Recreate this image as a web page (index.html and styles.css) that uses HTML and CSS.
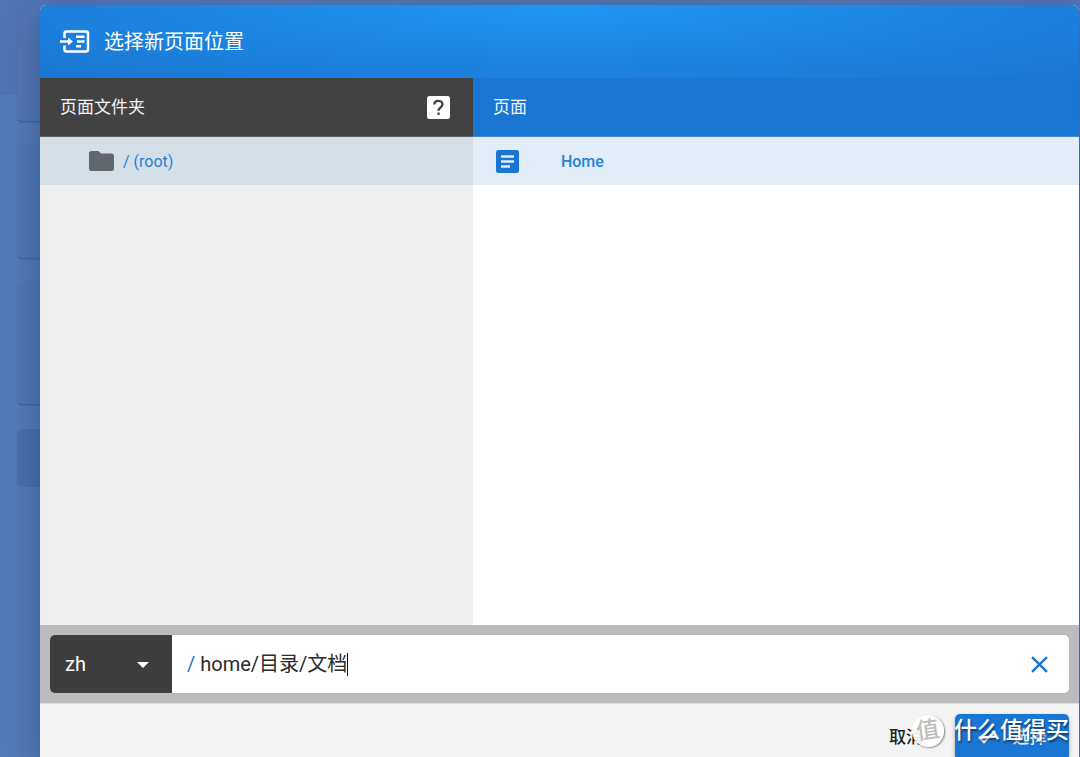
FILE: index.html
```html
<!DOCTYPE html>
<html lang="zh">
<head>
<meta charset="utf-8">
<title>选择新页面位置</title>
<link rel="stylesheet" href="styles.css">
</head>
<body>
<div class="backdrop" aria-hidden="true">
  <div class="backdrop-band"></div>
  <div class="backdrop-cards">
    <div class="ghost ghost-first"></div>
    <div class="ghost ghost-second"></div>
    <div class="ghost ghost-third"></div>
    <div class="ghost ghost-flat"></div>
  </div>
</div>
<main class="dialog" role="dialog" aria-labelledby="dialog-title">
  <header class="dialog-header">
    <svg class="title-icon" viewBox="0 0 30 24" aria-hidden="true">
      <path d="M4.500 8V3.500Q4.500 1.500 6.500 1.500H26Q28 1.500 28 3.500V19.500Q28 21.500 26 21.500H6.500Q4.500 21.500 4.500 19.500V15.500" fill="none" stroke="#fff" stroke-width="2.500"/>
      <path d="M0 11.500H9" stroke="#fff" stroke-width="2.500"/>
      <path d="M8 7.500L13 11.500L8 15.500Z" fill="#fff"/>
      <path d="M16 6.700H24.500M17 11.500H24.500M16 16.300H21" stroke="#fff" stroke-width="2.500"/>
    </svg>
    <h1 class="dialog-title" id="dialog-title">选择新页面位置</h1>
  </header>
  <div class="columns">
    <section class="folders">
      <div class="column-head column-head-dark">
        <h2 class="column-title">页面文件夹</h2>
        <button class="help" type="button" aria-label="帮助">
          <svg viewBox="0 0 23 23" aria-hidden="true">
            <rect width="23" height="23" rx="2.500" fill="#fff"/>
            <path d="M7.300 8.600C7.300 3.600 15.500 3.600 15.500 8.300C15.500 11.200 11.500 11.400 11.500 14.800" fill="none" stroke="#424242" stroke-width="2.300"/>
            <rect x="10.300" y="16.500" width="2.400" height="2.400" fill="#424242"/>
          </svg>
        </button>
      </div>
      <button class="row folder-row" type="button">
        <svg class="folder-icon" viewBox="0 0 25 20" aria-hidden="true"><path d="M2.500 0H9.500L12 2.500H22.500Q25 2.500 25 5V17.500Q25 20 22.500 20H2.500Q0 20 0 17.500V2.500Q0 0 2.500 0Z" fill="#61676c"/></svg>
        <span>/ (root)</span>
      </button>
    </section>
    <section class="pages">
      <div class="column-head column-head-blue">
        <h2 class="column-title">页面</h2>
      </div>
      <button class="row page-row" type="button">
        <svg class="page-icon" viewBox="0 0 23 23" aria-hidden="true">
          <rect width="23" height="23" rx="2.500" fill="#1976d2"/>
          <path d="M5 6.500H18M5 11.500H18M5 16.500H14" stroke="#e3edf7" stroke-width="2.400"/>
        </svg>
        <span>Home</span>
      </button>
    </section>
  </div>
  <div class="path-bar">
    <div class="locale">
      <select class="locale-select" aria-label="语言"><option>zh</option></select>
      <svg class="locale-arrow" viewBox="0 0 12 6" aria-hidden="true"><path d="M0 0H12L6 6Z" fill="#fff"/></svg>
    </div>
    <div class="path-field">
      <label class="path-prefix" for="path">/</label>
      <input class="path-input" id="path" type="text" value="home/目录/文档">
      <span class="caret"></span>
      <button class="clear" type="button" aria-label="清除">
        <svg viewBox="0 0 16 16" aria-hidden="true"><path d="M1 1L15 15M15 1L1 15" stroke="#1976d2" stroke-width="2.300"/></svg>
      </button>
    </div>
  </div>
  <footer class="actions">
    <button class="cancel" type="button">取消</button>
    <button class="confirm" type="button">
      <svg class="check" viewBox="0 0 18 14" aria-hidden="true"><path d="M1 7L6 12L17 1" fill="none" stroke="#fff" stroke-width="2.400"/></svg>
      <span>选择</span>
    </button>
  </footer>
</main>
<div class="watermark">
  <span class="watermark-badge">值</span>
  <span>什么值得买</span>
</div>
</body>
</html>
```
FILE: styles.css
```css
* { box-sizing: border-box; }

body {
  margin: 0;
  height: 100vh;
  padding: 5px 1px 0 40px;
  overflow: hidden;
  position: relative;
  background: #537cb9;
  font-family: Roboto, "Noto Sans CJK SC", sans-serif;
}

h1, h2 { margin: 0; font-weight: 400; }

button, input, select {
  border: 0;
  padding: 0;
  background: none;
  color: inherit;
  font: inherit;
}

button svg { display: block; }

.backdrop {
  position: absolute;
  inset: 0;
}

.backdrop-band {
  height: 94px;
  background: #5276b6;
  border-bottom: 1px solid #4c70ae;
}

.backdrop-cards {
  position: absolute;
  inset: 4px 0 0 17px;
}

.ghost {
  border-radius: 5px;
  background: #4f78b5;
  box-shadow: 0 2px 2px -1px rgba(30, 60, 120, 0.5);
}

.ghost-first { height: 117px; background: #5277b6; }
.ghost-second { height: 115px; margin-top: 22px; }
.ghost-third { height: 123px; margin-top: 23px; }
.ghost-flat { height: 58px; margin-top: 25px; background: #4970af; box-shadow: none; }

.dialog {
  position: relative;
  display: flex;
  flex-direction: column;
  height: calc(100vh + 8px);
  border-radius: 6px;
  overflow: hidden;
  background: #fff;
}

.backdrop::after {
  content: "";
  position: absolute;
  inset: 5px 1px 0 40px;
  border-radius: 6px;
  box-shadow: 0 12px 34px 3px rgba(35, 55, 100, 0.45);
}

.dialog-header {
  display: flex;
  align-items: center;
  gap: 14px;
  height: 73px;
  padding: 0 20px;
  color: #fff;
  background: radial-gradient(ellipse at top, #2196f3, #1976d2 100%);
}

.title-icon { width: 30px; height: 24px; }

.dialog-title { font-size: 20px; line-height: 28px; }

.columns {
  flex: 1;
  display: grid;
  grid-template-columns: 5fr 7fr;
}

.folders { background: #eee; }

.column-head {
  display: flex;
  align-items: center;
  justify-content: space-between;
  height: 59px;
  padding: 0 23px 0 20px;
  color: #fff;
}

.column-head-dark { background: #424242; border-bottom: 1px solid #606060; }
.column-head-blue { background: #1976d2; border-bottom: 1px solid #3f8cda; }

.column-title { font-size: 17px; line-height: 24px; color: #f1f4f7; }

.help svg { width: 23px; height: 23px; }

.row {
  display: flex;
  align-items: center;
  width: 100%;
  height: 48px;
  color: #2680d7;
  font-size: 16px;
}

.folder-row { gap: 9px; padding-left: 49px; background: #d5dfe8; }
.folder-icon { width: 25px; height: 20px; }

.page-row { gap: 42px; padding-left: 23px; background: #e3edf7; font-weight: 500; }
.page-icon { width: 23px; height: 23px; }

.path-bar {
  display: flex;
  padding: 10px;
  background: #bcbcbc;
}

.locale {
  position: relative;
  width: 122px;
  height: 58px;
  border-radius: 5px 0 0 5px;
  background: #3d3d3d;
  color: #fff;
  font-size: 20px;
}

.locale-select {
  appearance: none;
  width: 100%;
  height: 100%;
  padding-left: 15px;
}

.locale-arrow {
  position: absolute;
  top: 27px;
  right: 23px;
  width: 12px;
  height: 6px;
  pointer-events: none;
}

.path-field {
  flex: 1;
  display: flex;
  align-items: center;
  padding: 0 21px 0 15px;
  border-radius: 0 5px 5px 0;
  background: #fff;
  color: #2b2b2b;
  font-size: 20px;
}

.path-prefix { margin-right: 5px; color: #1976d2; }
.path-input { field-sizing: content; height: 26px; line-height: 26px; outline: 0; }
.caret { width: 1px; height: 23px; background: #111; }
.clear { margin-left: auto; }
.clear svg { width: 17px; height: 17px; }

.actions {
  display: flex;
  justify-content: flex-end;
  align-items: center;
  gap: 32px;
  padding: 10px;
  border-top: 1px solid #ddd;
  background: #f4f4f4;
  font-size: 17px;
  line-height: 24px;
  font-weight: 500;
}

.cancel { color: #222; }

.confirm {
  display: flex;
  align-items: center;
  justify-content: center;
  gap: 17px;
  width: 114px;
  height: 46px;
  border-radius: 5px;
  background: #1976d2;
  box-shadow: 0 2px 4px rgba(0, 0, 0, 0.3);
  color: #e3edf7;
}

.check { width: 18px; height: 14px; }

.watermark {
  position: absolute;
  right: 11px;
  bottom: 10px;
  display: flex;
  align-items: center;
  gap: 10px;
  color: #fff;
  font-size: 23px;
  line-height: 32px;
  font-weight: 500;
  text-shadow: 1px 2px 2px rgba(0, 0, 0, 0.5);
}

.watermark-badge {
  width: 32px;
  height: 32px;
  border-radius: 50%;
  background: rgba(255, 255, 255, 0.92);
  box-shadow: 1px 1px 2px rgba(0, 0, 0, 0.45);
  color: #bdbdbd;
  text-align: center;
  text-shadow: none;
  transform: rotate(-8deg);
}
```
